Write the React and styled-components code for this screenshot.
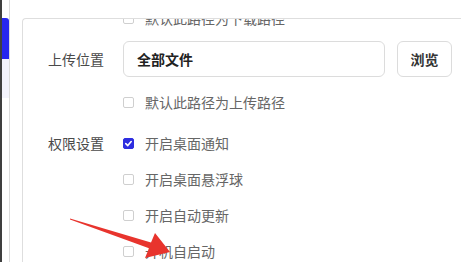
import styled, { createGlobalStyle } from "styled-components";

const GlobalStyle = createGlobalStyle`
    html, body {
        margin: 0;
        padding: 0;
        background: #fff;
        overflow: hidden;
    }
    body {
        font-family: "Noto Sans CJK SC", "Microsoft YaHei", sans-serif;
    }
`;

function Checkbox({ checked }) {
    return (
        <Box $checked={checked}>
            {checked && (
                <svg width="9" height="9" viewBox="0 0 10 10">
                    <path d="M2 5.2 L4.2 7.3 L8 2.8" fill="none" stroke="#fff" strokeWidth="1.8" strokeLinecap="round" strokeLinejoin="round" />
                </svg>
            )}
        </Box>
    );
}

function CheckItem({ checked, children }) {
    return (
        <CheckRow>
            <Checkbox checked={checked} />
            <span>{children}</span>
        </CheckRow>
    );
}

function App() {
    return (
        <Page>
            <GlobalStyle />
            <Strip />
            <Sidebar>
                <NavItem $active />
                <NavItem />
            </Sidebar>
            <Card>
                <Form>
                    <Section>
                        <Label />
                        <Controls>
                            <CheckItem>默认此路径为下载路径</CheckItem>
                        </Controls>
                    </Section>
                    <Section $top={5}>
                        <Label>上传位置</Label>
                        <Controls>
                            <InputRow>
                                <PathInput>全部文件</PathInput>
                                <Button>浏览</Button>
                            </InputRow>
                        </Controls>
                    </Section>
                    <Section $top={7}>
                        <Label />
                        <Controls>
                            <CheckItem>默认此路径为上传路径</CheckItem>
                        </Controls>
                    </Section>
                    <Section $top={5}>
                        <Label>权限设置</Label>
                        <Controls>
                            <CheckItem checked>开启桌面通知</CheckItem>
                            <CheckItem>开启桌面悬浮球</CheckItem>
                            <CheckItem>开启自动更新</CheckItem>
                            <CheckItem>开机自启动</CheckItem>
                        </Controls>
                    </Section>
                </Form>
            </Card>
            <Arrow width="461" height="262" viewBox="0 0 461 262">
                <polygon
                    points="70,218.4 151,242.6 155,233 170,252 145,258 149,248.3 70,219.6"
                    fill="#e8342d"
                />
            </Arrow>
        </Page>
    );
}

export default App;

const Page = styled.div`
    position: relative;
    display: flex;
    width: 461px;
    height: 262px;
    overflow: hidden;
`;

const Strip = styled.div`
    width: 2px;
    background: #3f3f3f;
`;

const Sidebar = styled.div`
    width: 7px;
    padding-top: 18px;
    border-right: 1px solid #dcdcdc;
    margin-right: 12px;
`;

const NavItem = styled.div`
    height: ${(p) => (p.$active ? "41px" : "39px")};
    background: ${(p) => (p.$active ? "#2626ef" : "#f3f3fc")};
    border-radius: ${(p) => (p.$active ? "0 3px 0 0" : "0")};
`;

const Card = styled.div`
    flex: 1;
    margin-top: 18px;
    border: 1px solid #dedede;
    border-right: none;
    border-bottom: none;
    border-radius: 4px 0 0 0;
    overflow: hidden;
`;

const Form = styled.div`
    margin-top: -19px;
    display: flex;
    flex-direction: column;
`;

const Section = styled.div`
    display: flex;
    margin-top: ${(p) => p.$top || 0}px;
`;

const Label = styled.div`
    width: 75px;
    padding-left: 25px;
    height: 36px;
    line-height: 36px;
    font-size: 14px;
    color: #4a4a4a;
    flex-shrink: 0;
`;

const Controls = styled.div`
    display: flex;
    flex-direction: column;
`;

const CheckRow = styled.div`
    display: flex;
    align-items: center;
    height: 36px;
    gap: 11px;
    font-size: 14px;
    color: #666;
    white-space: nowrap;
`;

const Box = styled.span`
    box-sizing: border-box;
    width: 11px;
    height: 11px;
    border-radius: 2px;
    border: 1px solid ${(p) => (p.$checked ? "#2e2ee0" : "#cfcfcf")};
    background: ${(p) => (p.$checked ? "#2e2ee0" : "#fff")};
    display: flex;
    align-items: center;
    justify-content: center;
`;

const InputRow = styled.div`
    display: flex;
    gap: 12px;
`;

const PathInput = styled.div`
    box-sizing: border-box;
    width: 262px;
    height: 36px;
    border: 1px solid #dcdcdc;
    border-radius: 6px;
    padding-left: 13px;
    display: flex;
    align-items: center;
    font-size: 14px;
    font-weight: 700;
    color: #222;
`;

const Button = styled.div`
    box-sizing: border-box;
    width: 55px;
    height: 36px;
    border: 1px solid #dcdcdc;
    border-radius: 6px;
    display: flex;
    align-items: center;
    justify-content: center;
    font-size: 14px;
    font-weight: 700;
    color: #333;
`;

const Arrow = styled.svg`
    position: absolute;
    left: 0;
    top: 0;
    pointer-events: none;
`;
